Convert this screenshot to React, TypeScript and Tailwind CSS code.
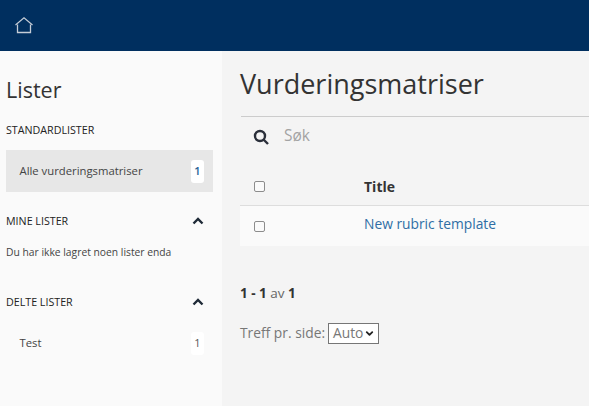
import { ChevronDown } from "lucide-react";

function ChevronUp() {
  return (
    <svg viewBox="0 0 12 8" className="w-[12px] h-[8px]" fill="none" stroke="#1f2a37" strokeWidth="2.4">
      <path d="M1.5 6.5 L6 2 L10.5 6.5" />
    </svg>
  );
}

function Count({ active }: { active?: boolean }) {
  return (
    <span className={`flex items-center justify-center w-[13px] h-[23px] rounded-[3px] bg-white text-[11px] ${active ? "font-semibold text-[#2a6496]" : "text-[#555]"}`}>
      1
    </span>
  );
}

function Check() {
  return <input type="checkbox" className="ml-[14px] w-[11px] h-[11px] appearance-none rounded-[2px] border border-[#8c8c8c] bg-[#fafafa] shrink-0" readOnly />;
}

export default function App() {
  return (
    <div className="w-[589px] h-[406px] overflow-hidden flex flex-col bg-[#f4f4f4] text-[#333] font-['Open_Sans',sans-serif]">
      {/* topp */}
      <div className="h-[51px] shrink-0 bg-[#002f5f] flex items-center pl-[15px]">
        <svg viewBox="0 0 18 17" className="w-[18px] h-[17px]" fill="none" stroke="#c4ccd6" strokeWidth="1.2">
          <path d="M0.5 8 L9 0.8 L17.5 8" />
          <path d="M2.5 7.5 V15.5 H15.5 V7.5" strokeWidth="1.3" />
        </svg>
      </div>
      <div className="flex flex-1">
        {/* sidemeny */}
        <div className="w-[222px] shrink-0 bg-[#fafafa] pl-[6px] pr-[9px]">
          <h2 className="text-[21.5px] leading-[28px] mt-[25px] text-[#333]">Lister</h2>
          <p className="text-[10.7px] leading-[14px] mt-[19px] text-[#222]">STANDARDLISTER</p>
          <div className="flex items-center justify-between h-[42px] mt-[13px] bg-[#e7e7e7] pl-[13.5px] pr-[9px]">
            <span className="text-[11.3px] text-[#444]">Alle vurderingsmatriser</span>
            <Count active />
          </div>
          <div className="flex items-center justify-between mt-[22px] h-[14px] pr-[9px]">
            <span className="text-[10.7px] text-[#222]">MINE LISTER</span>
            <ChevronUp />
          </div>
          <p className="text-[10.3px] leading-[14px] mt-[17px] text-[#444]">Du har ikke lagret noen lister enda</p>
          <div className="flex items-center justify-between mt-[36px] h-[14px] pr-[9px]">
            <span className="text-[10.7px] text-[#222]">DELTE LISTER</span>
            <ChevronUp />
          </div>
          <div className="flex items-center justify-between mt-[23px] pl-[13.5px] pr-[9px]">
            <span className="text-[11.3px] text-[#444]">Test</span>
            <Count />
          </div>
        </div>
        {/* innhold */}
        <div className="flex-1 min-w-0 pl-[18px]">
          <h1 className="text-[27px] leading-[36px] mt-[15px] text-[#333] whitespace-nowrap">Vurderingsmatriser</h1>
          <div className="mt-[14px] ml-[1px] border-t border-[#ccc] h-[48px] flex items-center pl-[12px]">
            <svg viewBox="0 0 16 16" className="w-[16px] h-[16px] -mt-[7px]" fill="none" stroke="#2a2f3a" strokeWidth="2.4">
              <circle cx="7" cy="7" r="5" />
              <path d="M10.5 10.5 L15 15" />
            </svg>
            <span className="ml-[15px] -mt-[9px] text-[15.5px] text-[#a3a3a3]">Søk</span>
          </div>
          <div className="h-[42px] pt-[4px] flex items-center border-b border-[#ddd]">
            <Check />
            <span className="ml-[99px] text-[14px] font-bold text-[#333]">Title</span>
          </div>
          <div className="h-[40px] flex items-center bg-[#fafafa]">
            <Check />
            <span className="ml-[99px] -mt-[4px] text-[13.8px] text-[#2f6ea5]">New rubric template</span>
          </div>
          <p className="mt-[37px] text-[13.5px] leading-[20px] text-[#666]">
            <b className="text-[#333]">1 - 1</b> av <b className="text-[#333]">1</b>
          </p>
          <div className="mt-[20px] flex items-center text-[13.8px] text-[#777]">
            <span>Treff pr. side:</span>
            <div className="ml-[3px] flex items-center h-[21px] w-[51px] border border-[#767676] bg-white pl-[4px]">
              <span>Auto</span>
              <ChevronDown className="w-[11px] h-[11px] ml-[1px] text-[#222]" strokeWidth={4} />
            </div>
          </div>
        </div>
      </div>
    </div>
  );
}
